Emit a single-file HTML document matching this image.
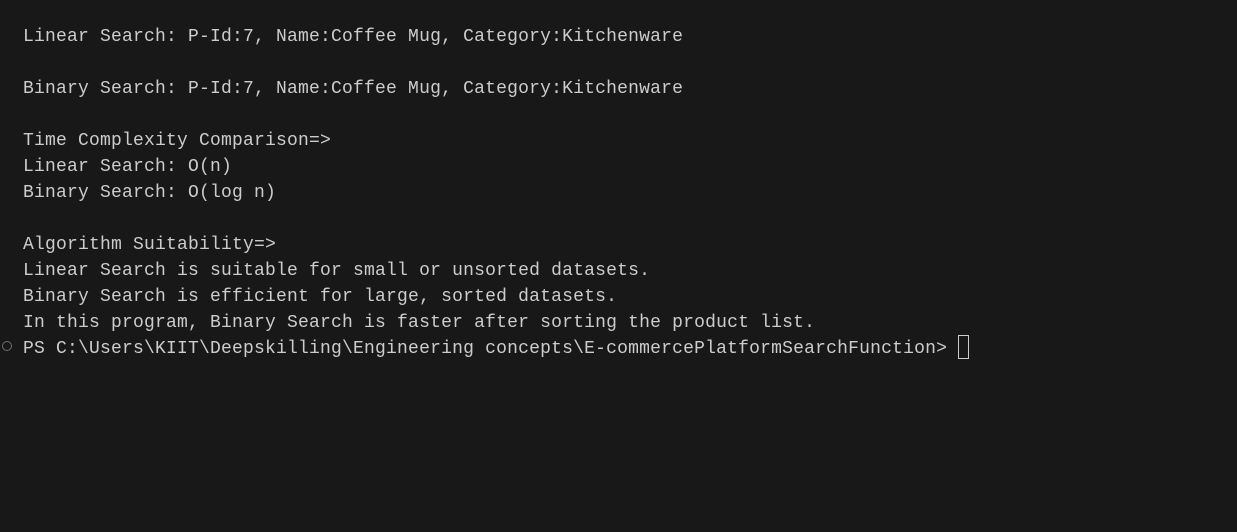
<!DOCTYPE html>
<html><head><style>
html,body{margin:0;padding:0;background:#181818;width:1237px;height:532px;overflow:hidden}
pre{position:absolute;left:23px;top:24px;margin:0;font-family:"Liberation Mono",monospace;font-size:18px;letter-spacing:0.2px;line-height:26px;color:#cccccc;white-space:pre}
.c{position:absolute;left:2px;top:341px;width:8px;height:8px;border:1.5px solid #6e6e6e;border-radius:50%}
.cur{position:absolute;left:958px;top:335px;width:9px;height:22px;border:1px solid #cccccc}
</style></head><body>
<pre>Linear Search: P-Id:7, Name:Coffee Mug, Category:Kitchenware

Binary Search: P-Id:7, Name:Coffee Mug, Category:Kitchenware

Time Complexity Comparison=&gt;
Linear Search: O(n)
Binary Search: O(log n)

Algorithm Suitability=&gt;
Linear Search is suitable for small or unsorted datasets.
Binary Search is efficient for large, sorted datasets.
In this program, Binary Search is faster after sorting the product list.
PS C:\Users\KIIT\Deepskilling\Engineering concepts\E-commercePlatformSearchFunction&gt; </pre>
<div class="c"></div>
<div class="cur"></div>
</body></html>
